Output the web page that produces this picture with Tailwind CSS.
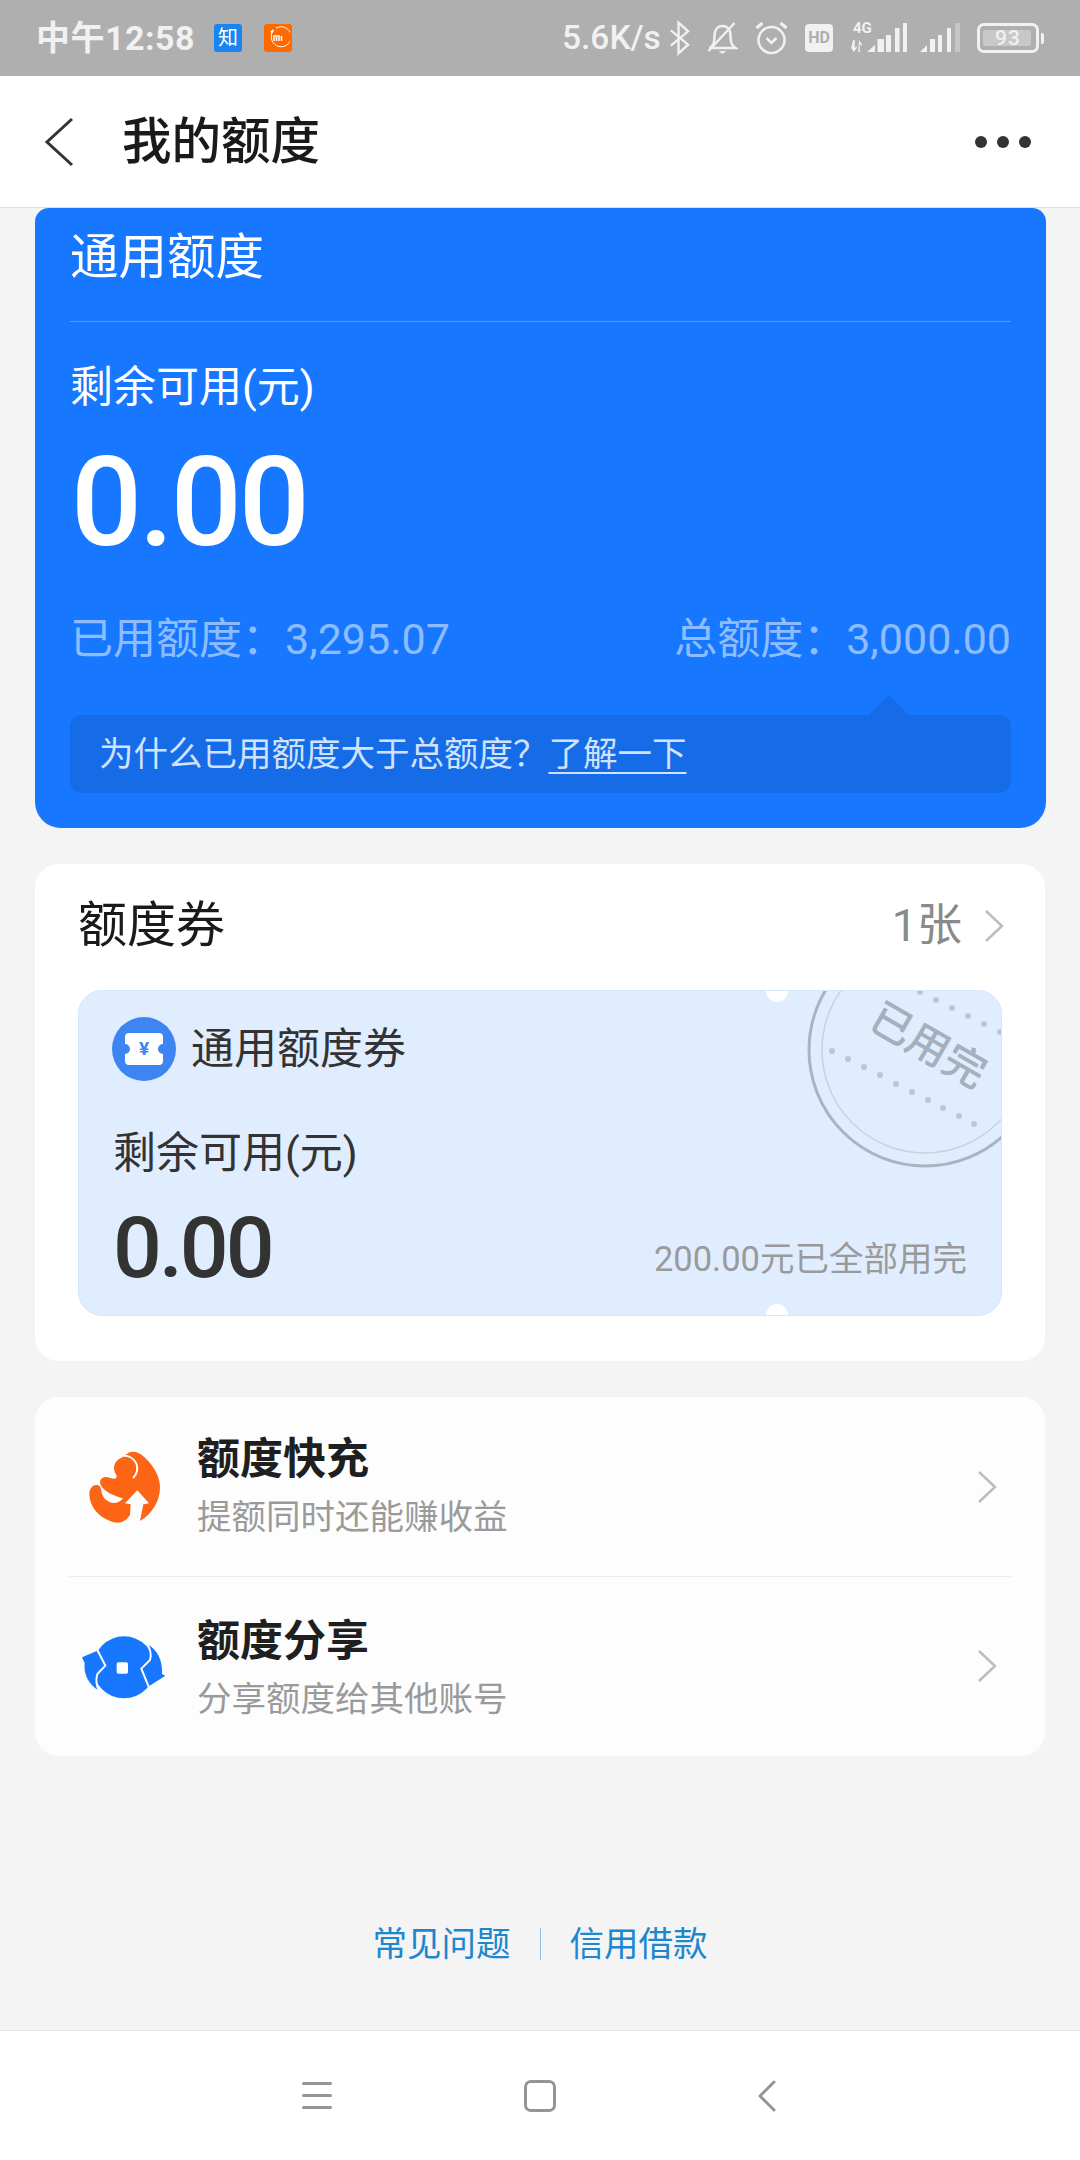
<!DOCTYPE html>
<html lang="zh-CN">
<head>
    <meta charset="UTF-8">
    <meta name="viewport" content="width=device-width, initial-scale=1.0">
    <title>我的额度</title>
    <script src="https://cdn.jsdelivr.net/npm/@tailwindcss/browser@4"></script>
</head>
<body class="bg-[#f4f4f4] font-['Roboto','Noto_Sans_CJK_SC',sans-serif]">
    <div class="w-[1080px] h-[2160px] flex flex-col overflow-hidden">
        <!-- Status bar -->
        <div class="h-[76px] shrink-0 bg-[#afafaf] flex items-center text-[#f1f1f1]">
            <span class="ml-[36px] w-[178px] text-[34px] leading-[40px] font-bold tracking-[0.5px]">中午12:58</span>
            <div class="w-[28px] h-[28px] rounded-[3px] bg-[#1a84f0] flex items-center justify-center text-[20px] leading-[28px] text-white">知</div>
            <div class="ml-[22px] w-[28px] h-[28px] rounded-[3px] bg-[#ff6a00] flex items-center justify-center">
                <svg width="24" height="24" viewBox="0 0 24 24" fill="none" stroke="#fff"><path d="M7 5A10 10 0 1 0 10 2.2" stroke-width="1"/><path d="M5 6.500L7.500 4" stroke-width="2"/><path d="M8 15v-5h5v5M10.500 11v4M15.500 10v5" stroke-width="1.500"/></svg>
            </div>
            <span class="ml-[270px] w-[107px] text-[33.500px] leading-[40px] font-medium">5.6K/s</span>
            <svg width="21" height="36" viewBox="0 0 22 36" fill="none" stroke="#f1f1f1" stroke-width="2.500"><path d="M2 10L20 25L10 34V2L20 11L2 26"/></svg>
            <svg class="ml-[17px]" width="31" height="34" viewBox="0 0 30 34" fill="none" stroke="#f1f1f1" stroke-width="2.500"><path d="M2 27c5-3 5-7 5-12c0-6 3-10 8-10s8 4 8 9c0 5 0 10 5 13H2"/><path d="M1 30L27 2"/><path d="M11 30h8l-4 3z" fill="#f1f1f1" stroke="none"/></svg>
            <svg class="ml-[16px]" width="35" height="36" viewBox="0 0 34 36" fill="none" stroke="#f1f1f1"><circle cx="17" cy="20" r="13" stroke-width="2.500"/><path d="M2 8L8 3M32 8L26 3" stroke-width="3"/><path d="M12 18l5 5l5-5" stroke-width="2.500"/></svg>
            <div class="ml-[16px] w-[28px] h-[28px] rounded-[4px] bg-[#f1f1f1] flex items-center justify-center text-[16px] leading-[28px] font-bold text-[#afafaf]">HD</div>
            <svg class="ml-[17px]" width="57" height="36" viewBox="0 0 57 36" fill="#f1f1f1"><text x="3" y="13" font-size="15" font-weight="700" font-family="Roboto">4G</text><path d="M3.200 20h1.600v8l2-2v2l-2.800 4l-2.800-4v-0.500zM8.200 32h1.600v-8l2 2v-2l-2.800-4z"/><path d="M17 32l8-7v7zM27.500 19h6.500v13h-6.500zM36 15h5v17h-5zM45 8h4.500v24h-4.500zM53 3h4v29h-4z"/></svg>
            <svg class="ml-[13px]" width="41" height="36" viewBox="0 0 41 36" fill="#f1f1f1"><path d="M0 32l7-7v7zM10 19h5v13h-5zM18 15h4v17h-4zM27 8h4v24h-4z"/><path d="M35 3h5v29h-5z" opacity="0.35"/></svg>
            <div class="ml-[16px] w-[62px] h-[30px] rounded-[7px] border-[3px] border-[#f1f1f1] relative flex items-center justify-center">
                <div class="absolute left-[3px] top-[4px] bottom-[4px] right-[5px] bg-[#c8c8c8] rounded-[2px]"></div>
                <span class="relative text-[21px] leading-[24px] font-medium tracking-[1px]">93</span>
            </div>
            <div class="ml-[2px] w-[3px] h-[11px] rounded-r-[2px] bg-[#f1f1f1]"></div>
        </div>

        <!-- Header -->
        <div class="h-[132px] shrink-0 bg-white border-b border-[#dedede] flex items-center">
            <svg class="ml-[43px]" width="32" height="50" viewBox="0 0 32 50" fill="none" stroke="#333" stroke-width="3"><path d="M29 2L4 25L29 48"/></svg>
            <h1 class="ml-[47px] text-[49.500px] leading-[60px] font-medium text-[#1a1a1a]">我的额度</h1>
            <div class="ml-auto mr-[49px] flex gap-[10px]">
                <span class="w-[12px] h-[12px] rounded-full bg-[#333]"></span>
                <span class="w-[12px] h-[12px] rounded-full bg-[#333]"></span>
                <span class="w-[12px] h-[12px] rounded-full bg-[#333]"></span>
            </div>
        </div>

        <div class="flex-1 px-[35px] flex flex-col">
            <!-- Quota card -->
            <div class="h-[620px] w-[1011px] bg-[#1777ff] rounded-t-[14px] rounded-b-[26px] px-[35px] text-white">
                <div class="h-[114px] pt-[26px] border-b border-white/25 text-[48.500px] leading-[48px]">通用额度</div>
                <div class="mt-[40px] text-[43px] leading-[50px]">剩余可用(元)</div>
                <div class="mt-[31px] pl-[1px] text-[125px] leading-[120px] font-medium tracking-[-3px]">0.00</div>
                <div class="mt-[51px] flex justify-between text-[43px] leading-[50px] text-[#8dbdff]">
                    <span>已用额度：3,295.07</span>
                    <span>总额度：3,000.00</span>
                </div>
                <div class="relative mt-[51px] h-[78px] rounded-[12px] bg-[#166be6] pl-[29px] flex items-center text-[34.500px] leading-[44px] text-[#cfe2ff]">
                    <div class="absolute right-[102px] -top-[20px] w-0 h-0 border-x-[20px] border-x-transparent border-b-[20px] border-b-[#166be6]"></div>
                    <span>为什么已用额度大于总额度？<span class="underline decoration-2 underline-offset-[6px] ml-[1px]">了解一下</span></span>
                </div>
            </div>

            <!-- Coupon card -->
            <div class="mt-[36px] h-[497px] bg-white rounded-[24px] px-[43px]">
                <div class="h-[124px] flex items-center justify-between">
                    <span class="text-[49px] leading-[60px] text-[#1a1a1a]">额度券</span>
                    <div class="flex items-center">
                        <span class="text-[45px] leading-[56px] text-[#8a8a8a]">1张</span>
                        <svg class="ml-[22px] mr-[-2px]" width="20" height="34" viewBox="0 0 20 34" fill="none" stroke="#bdbdbd" stroke-width="2.500"><path d="M2 2L18 17L2 32"/></svg>
                    </div>
                </div>
                <div class="mt-[2px] relative h-[326px] rounded-[24px] bg-[#e0edff] border border-[#d6e6fc] overflow-hidden">
                    <svg class="absolute -left-px -top-px" width="924" height="326" viewBox="0 0 924 326" fill="none">
                        <circle cx="847" cy="60" r="116" stroke="#a9b4c2" stroke-width="3"/>
                        <circle cx="847" cy="60" r="103" stroke="#c9d3df" stroke-width="1.500"/>
                        <g fill="#bcc7d4">
                            <circle cx="754" cy="61" r="3"/><circle cx="770" cy="69" r="3"/><circle cx="786" cy="77" r="3"/><circle cx="802" cy="85" r="3"/><circle cx="818" cy="94" r="3"/><circle cx="834" cy="102" r="3"/><circle cx="850" cy="110" r="3"/><circle cx="865" cy="118" r="3"/><circle cx="881" cy="126" r="3"/><circle cx="896" cy="134" r="3"/>
                            <circle cx="842" cy="2" r="3"/><circle cx="858" cy="10" r="3"/><circle cx="874" cy="18" r="3"/><circle cx="890" cy="26" r="3"/><circle cx="906" cy="34" r="3"/><circle cx="922" cy="42" r="3"/>
                        </g>
                    </svg>
                    <span class="absolute left-[786px] top-[30px] rotate-[30deg] text-[42px] leading-[50px] font-medium text-[#a5afbd]">已用完</span>
                    <!-- ticket notches -->
                    <span class="absolute left-[687px] -top-[11px] w-[22px] h-[22px] rounded-full bg-white"></span>
                    <span class="absolute left-[687px] -bottom-[11px] w-[22px] h-[22px] rounded-full bg-white"></span>

                    <div class="relative">
                        <div class="pt-[26px] pl-[33px] flex items-center">
                            <div class="relative w-[64px] h-[64px] rounded-full bg-[#3d85f3] flex items-center justify-center">
                                <svg width="38" height="32" viewBox="0 0 38 32" fill="#fff"><path d="M4 0H34a4 4 0 0 1 4 4V11a5 5 0 0 0 0 10V28a4 4 0 0 1-4 4H4a4 4 0 0 1-4-4V21a5 5 0 0 0 0-10V4a4 4 0 0 1 4-4z"/></svg>
                                <span class="absolute inset-0 flex items-center justify-center text-[19px] leading-[20px] font-bold text-[#3d85f3]">¥</span>
                            </div>
                            <span class="ml-[15px] text-[43px] leading-[56px] text-[#333]">通用额度券</span>
                        </div>
                        <div class="mt-[47px] pl-[34px] text-[43px] leading-[50px] text-[#333]">剩余可用(元)</div>
                        <div class="mt-[22px] pl-[34px] pr-[34px] flex items-center justify-between">
                            <span class="text-[86px] leading-[96px] font-medium tracking-[-3px] text-[#333]">0.00</span>
                            <span class="mt-[22px] text-[34.500px] leading-[44px] text-[#9a9a9a]">200.00元已全部用完</span>
                        </div>
                    </div>
                </div>
            </div>

            <!-- Actions -->
            <div class="mt-[36px] h-[359px] bg-[#fdfdfd] rounded-[24px] px-[34px]">
                <div class="h-[180px] border-b border-[#eeeeee] flex items-center">
                    <svg class="ml-[11px] mb-[2px] shrink-0" width="90" height="90" viewBox="0 0 270 270" fill="#fb6515">
                        <path d="M140 40C150 28 175 30 195 50C225 78 240 110 240 140C240 180 215 220 180 240L190 190L207 187L172 148L135 187L152 190L150 222C135 245 115 250 90 240C55 228 28 195 28 160C28 140 40 130 52 132C66 135 62 150 68 163C74 178 92 188 105 186C118 184 126 178 128 172C105 165 75 155 62 132C56 118 66 106 80 108C90 110 100 115 108 112L128 45Z"/>
                        <path d="M128 45A38 38 0 0 1 159 111" fill="none" stroke="#fdfdfd" stroke-width="6"/>
                        <circle cx="135" cy="82" r="33"/>
                    </svg>
                    <div class="ml-[27px] pb-[3px]">
                        <div class="text-[43px] leading-[56px] font-bold text-[#1f1f1f]">额度快充</div>
                        <div class="mt-[7px] text-[34.500px] leading-[46px] text-[#9a9a9a]">提额同时还能赚收益</div>
                    </div>
                    <svg class="ml-auto mr-[14px]" width="20" height="34" viewBox="0 0 20 34" fill="none" stroke="#bdbdbd" stroke-width="2.500"><path d="M2 2L18 17L2 32"/></svg>
                </div>
                <div class="h-[178px] flex items-center">
                    <svg class="ml-[9px] shrink-0" width="95" height="85" viewBox="0 0 285 255" fill="#1777ff">
                        <circle cx="138" cy="130" r="93"/>
                        <path d="M12 100L58 80L80 126L56 150C52 165 52 178 62 200C32 182 16 150 20 118Z"/>
                        <path d="M262 155L214 186L192 134L216 108C220 90 215 78 206 60C240 76 254 112 252 150Z"/>
                        <path d="M58 78L82 125L58 150C52 168 54 185 66 208" fill="none" stroke="#fdfdfd" stroke-width="6"/>
                        <path d="M212 188L190 134L216 108C222 90 218 75 204 54" fill="none" stroke="#fdfdfd" stroke-width="6"/>
                        <rect x="116" y="115" width="34" height="34" rx="5" fill="#fdfdfd"/>
                    </svg>
                    <div class="ml-[24px] pt-[3px]">
                        <div class="text-[43px] leading-[56px] font-bold text-[#1f1f1f]">额度分享</div>
                        <div class="mt-[7px] text-[34.500px] leading-[46px] text-[#9a9a9a]">分享额度给其他账号</div>
                    </div>
                    <svg class="ml-auto mr-[14px]" width="20" height="34" viewBox="0 0 20 34" fill="none" stroke="#bdbdbd" stroke-width="2.500"><path d="M2 2L18 17L2 32"/></svg>
                </div>
            </div>

            <!-- Footer links -->
            <div class="mt-[168px] flex items-center justify-center text-[34.500px] leading-[40px] text-[#1b87cf]">
                <span>常见问题</span>
                <span class="mx-[29px] w-px h-[32px] bg-[#8fc3e7]"></span>
                <span>信用借款</span>
            </div>
        </div>

        <!-- Bottom navigation -->
        <div class="h-[130px] shrink-0 bg-white border-t border-[#e4e4e4] flex items-center">
            <div class="ml-[302px] flex flex-col gap-[9px]">
                <span class="w-[30px] h-[3px] rounded-full bg-[#949494]"></span>
                <span class="w-[30px] h-[3px] rounded-full bg-[#949494]"></span>
                <span class="w-[30px] h-[3px] rounded-full bg-[#949494]"></span>
            </div>
            <div class="ml-[192px] w-[32px] h-[32px] rounded-[7px] border-[3px] border-[#949494]"></div>
            <svg class="ml-[202px]" width="18" height="32" viewBox="0 0 18 32" fill="none" stroke="#949494" stroke-width="3" stroke-linecap="round"><path d="M16 2L2 16L16 30"/></svg>
        </div>
    </div>
</body>
</html>
